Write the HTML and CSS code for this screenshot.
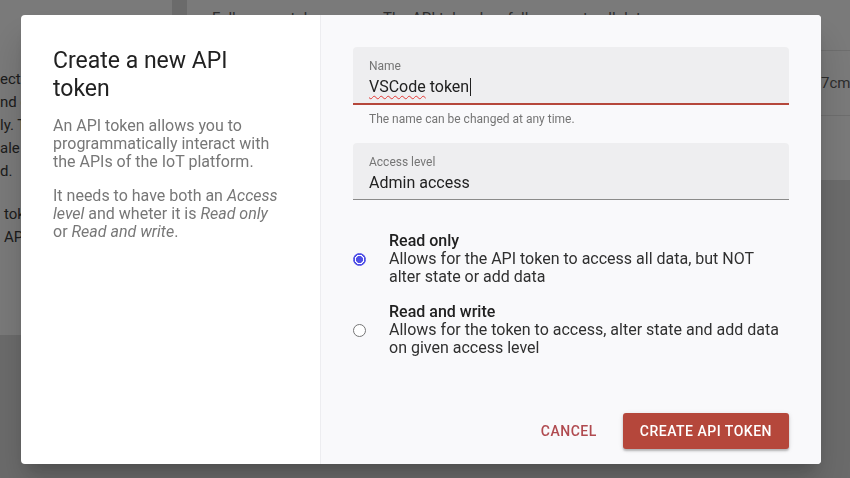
FILE: index.html
```html
<!DOCTYPE html>
<html lang="en">
<head>
    <meta charset="UTF-8">
    <meta name="viewport" content="width=device-width, initial-scale=1.0">
    <title>API tokens</title>
    <link rel="stylesheet" href="styles.css">
</head>
<body>
    <div class="page">
        <aside class="side-card">
            <p>ectly from<br>nd can be<br>ly. They<br>ale and<br>d.</p>
            <p class="indent">token<br>API</p>
        </aside>

        <main class="token-card">
            <div class="token-row first">
                <span class="token-name">Full access token</span>
                <span>The API token has full access to all data</span>
            </div>
            <div class="token-row">
                <span class="token-name wide">Development token</span>
                <span>7cm2xQ</span>
            </div>
            <div class="token-row last"></div>
        </main>
    </div>

    <div class="backdrop"></div>

    <div class="dialog">
        <section class="dialog-intro">
            <h2 class="dialog-title">Create a new API token</h2>
            <p>An API token allows you to programmatically interact with the APIs of the IoT platform.</p>
            <p>It needs to have both an <em>Access level</em> and wheter it is <em>Read only</em> or <em>Read and write</em>.</p>
        </section>

        <section class="dialog-form">
            <div class="field focused">
                <span class="field-label">Name</span>
                <div class="field-value"><span class="misspelled">VSCode</span> token<span class="caret"></span></div>
            </div>
            <p class="field-help">The name can be changed at any time.</p>

            <div class="field">
                <span class="field-label">Access level</span>
                <div class="field-value">Admin access</div>
            </div>

            <div class="radio-group">
                <label class="radio-option">
                    <input type="radio" name="mode" checked>
                    <span class="radio-text">
                        <strong>Read only</strong>
                        Allows for the API token to access all data, but NOT alter state or add data
                    </span>
                </label>
                <label class="radio-option">
                    <input type="radio" name="mode">
                    <span class="radio-text">
                        <strong>Read and write</strong>
                        Allows for the token to access, alter state and add data on given access level
                    </span>
                </label>
            </div>

            <div class="dialog-actions">
                <button class="btn btn-text">Cancel</button>
                <button class="btn btn-raised">Create API token</button>
            </div>
        </section>
    </div>
</body>
</html>
```

FILE: styles.css
```css
body {
    margin: 0;
    height: 100vh;
    overflow: hidden;
    font-family: Roboto, "Noto Sans", Arial, sans-serif;
    background-color: #e0e0e0;
}

/* page behind the dialog */
.page {
    display: flex;
    align-items: flex-start;
    gap: 15px;
}

.side-card {
    flex: none;
    width: 172px;
    height: 335px;
    box-sizing: border-box;
    padding-top: 68px;
    background-color: #ffffff;
    font-size: 15px;
    line-height: 23px;
    color: #3c3c3c;
    white-space: nowrap;
}

.side-card p {
    margin: 0 0 20px;
}

.side-card .indent {
    padding-left: 4px;
}

.token-card {
    flex: 1;
    min-width: 0;
    overflow: hidden;
    height: 180px;
    background-color: #ffffff;
    font-size: 15px;
    color: #5e5e5e;
    white-space: nowrap;
}

.token-row {
    display: flex;
    align-items: center;
    height: 65px;
    padding-left: 25px;
    border-bottom: 1px solid #e6e6e6;
    box-sizing: border-box;
}

.token-row.first {
    height: 51px;
    align-items: flex-start;
    padding-top: 8px;
    line-height: 20px;
}

.token-row.last {
    border-bottom: none;
}

.token-name {
    width: 171px;
    flex: none;
}

.token-name.wide {
    width: 609px;
}

.backdrop {
    position: fixed;
    inset: 0;
    background-color: rgba(0, 0, 0, 0.52);
}

/* dialog */
.dialog {
    position: fixed;
    left: 21px;
    top: 15px;
    width: 800px;
    height: 449px;
    display: flex;
    background-color: #ffffff;
    border-radius: 4px;
    overflow: hidden;
    box-shadow: 0 11px 15px -7px rgba(0, 0, 0, 0.2), 0 24px 38px 3px rgba(0, 0, 0, 0.14);
}

.dialog-intro {
    width: 299px;
    flex: none;
    box-sizing: border-box;
    padding: 32px 36px 32px 32px;
    font-size: 16px;
    line-height: 18px;
    color: #777777;
}

.dialog-title {
    margin: 0 0 14px;
    font-size: 23px;
    line-height: 28px;
    font-weight: 400;
    color: #212121;
}

.dialog-intro p {
    margin: 0 0 16px;
}

.dialog-form {
    flex: 1;
    display: flex;
    flex-direction: column;
    padding: 32px 32px 15px;
    background-color: #f9f9fb;
    border-left: 1px solid #ededf0;
}

.field {
    height: 45px;
    padding: 11px 16px 0;
    background-color: #eeeef0;
    border-radius: 4px 4px 0 0;
    border-bottom: 1px solid #8a8a8a;
}

.field.focused {
    border-bottom: 2px solid #b5473b;
}

.field-label {
    display: block;
    font-size: 12px;
    line-height: 16px;
    color: #757575;
}

.field-value {
    margin-top: 3px;
    font-size: 16px;
    line-height: 20px;
    color: #212121;
}

.misspelled {
    text-decoration: underline wavy #e53935 1px;
    text-underline-offset: 3px;
}

.caret {
    display: inline-block;
    width: 1px;
    height: 18px;
    margin-left: 1px;
    vertical-align: -4px;
    background-color: #212121;
}

.field-help {
    margin: 6px 16px 16px;
    font-size: 12px;
    line-height: 16px;
    color: #757575;
}

.radio-group {
    display: flex;
    flex-direction: column;
    gap: 17px;
    margin-top: 32px;
}

.radio-option {
    display: flex;
    align-items: center;
    font-size: 16px;
    line-height: 18px;
    color: #303030;
}

.radio-option input {
    appearance: none;
    flex: none;
    width: 13px;
    height: 13px;
    margin: 0 23px 0 0;
    border: 1px solid #767676;
    border-radius: 50%;
    background-color: #ffffff;
}

.radio-option input:checked {
    border-color: #4f4fe6;
    background: radial-gradient(circle closest-side, #4f4fe6 0 62%, #ffffff 68% 82%, #4f4fe6 88%);
}

.radio-text {
    max-width: 392px;
}

.radio-text strong {
    display: block;
    font-weight: 500;
    color: #212121;
}

.dialog-actions {
    display: flex;
    justify-content: flex-end;
    align-items: center;
    gap: 10px;
    margin-top: auto;
}

.btn {
    height: 36px;
    padding: 0 16px;
    border: none;
    border-radius: 3px;
    font-family: inherit;
    font-size: 14px;
    font-weight: 500;
    letter-spacing: 0.5px;
    text-transform: uppercase;
    cursor: pointer;
}

.btn-text {
    background: transparent;
    color: #b04a4f;
}

.btn-raised {
    padding: 0 17px;
    background-color: #b5473b;
    color: #ffffff;
    box-shadow: 0 2px 2px rgba(0, 0, 0, 0.22), 0 1px 5px rgba(0, 0, 0, 0.12);
}
```
